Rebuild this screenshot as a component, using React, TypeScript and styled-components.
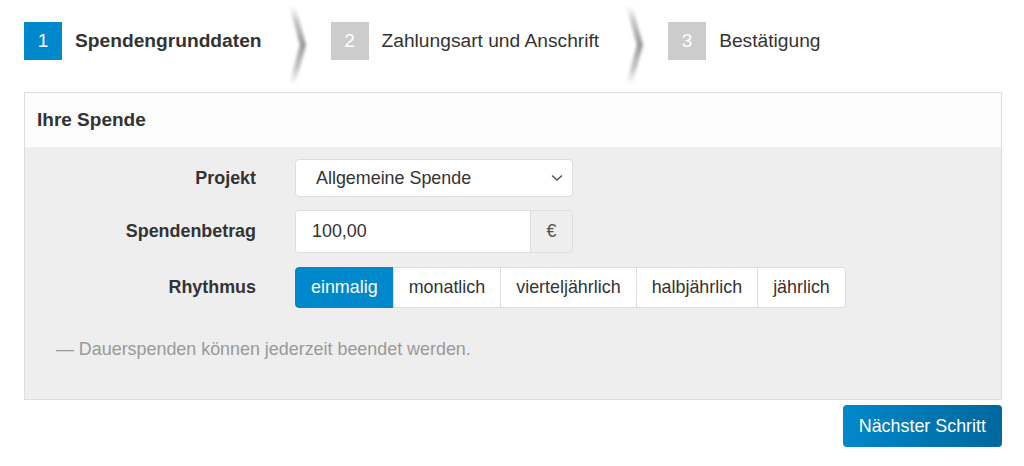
import styled, { createGlobalStyle } from "styled-components";

const GlobalStyle = createGlobalStyle`
  html, body {
    margin: 0;
    padding: 0;
    background: #ffffff;
    font-family: "Liberation Sans", Arial, sans-serif;
    color: #333333;
  }
`;

const steps = ["Spendengrunddaten", "Zahlungsart und Anschrift", "Bestätigung"];
const rhythms = ["einmalig", "monatlich", "vierteljährlich", "halbjährlich", "jährlich"];

export default function App() {
  return (
    <>
      <GlobalStyle />
      <Page>
        <Steps>
          {steps.map((title, i) => (
            <Step key={title}>
              <StepNumber $active={i === 0}>{i + 1}</StepNumber>
              <StepTitle $active={i === 0}>{title}</StepTitle>
              {i < steps.length - 1 && <Chevron />}
            </Step>
          ))}
        </Steps>

        <Panel>
          <PanelHeader>Ihre Spende</PanelHeader>
          <PanelBody>
            <Form>
              <Label>Projekt</Label>
              <Select>
                <span>Allgemeine Spende</span>
                <svg width="12" height="8" viewBox="0 0 12 8">
                  <path d="M1 1.5 L6 6 L11 1.5" fill="none" stroke="#555" strokeWidth="1.5" />
                </svg>
              </Select>

              <Label>Spendenbetrag</Label>
              <InputGroup>
                <Input>100,00</Input>
                <Addon>€</Addon>
              </InputGroup>

              <Label>Rhythmus</Label>
              <ButtonGroup>
                {rhythms.map((r, i) => (
                  <Segment key={r} $active={i === 0}>
                    {r}
                  </Segment>
                ))}
              </ButtonGroup>
            </Form>
            <Note>— Dauerspenden können jederzeit beendet werden.</Note>
          </PanelBody>
        </Panel>

        <Actions>
          <PrimaryButton>Nächster Schritt</PrimaryButton>
        </Actions>
      </Page>
    </>
  );
}

// soft shaded arrow between the wizard steps
function Chevron() {
  return (
    <ChevronSvg width="26" height="84" viewBox="0 0 26 84">
      <defs>
        <linearGradient id="chev" x1="0" y1="0" x2="0" y2="1">
          <stop offset="0" stopColor="#ccc" stopOpacity="0" />
          <stop offset="0.2" stopColor="#bbb" stopOpacity="0.8" />
          <stop offset="0.5" stopColor="#999" stopOpacity="1" />
          <stop offset="0.8" stopColor="#bbb" stopOpacity="0.8" />
          <stop offset="1" stopColor="#ccc" stopOpacity="0" />
        </linearGradient>
        <filter id="chevBlur" x="-50%" y="-10%" width="200%" height="120%">
          <feGaussianBlur stdDeviation="1.8" />
        </filter>
      </defs>
      <path
        d="M6 2 L17 42 L6 82"
        fill="none"
        stroke="url(#chev)"
        strokeWidth="6"
        filter="url(#chevBlur)"
      />
    </ChevronSvg>
  );
}

const Page = styled.div`
  width: 978px;
  padding: 22px 0 0 24px;
`;

const Steps = styled.div`
  display: flex;
  align-items: center;
  height: 38px;
  margin-bottom: 32px;
`;

const Step = styled.div`
  display: flex;
  align-items: center;
`;

const StepNumber = styled.div<{ $active: boolean }>`
  width: 38px;
  height: 38px;
  display: flex;
  align-items: center;
  justify-content: center;
  background: ${(p) => (p.$active ? "#0088cc" : "#cccccc")};
  color: #ffffff;
  font-size: 19px;
`;

const StepTitle = styled.div<{ $active: boolean }>`
  margin-left: 13px;
  font-size: 19.2px;
  font-weight: ${(p) => (p.$active ? "bold" : "normal")};
  color: #333333;
`;

const ChevronSvg = styled.svg`
  margin: -19px 19px -27px 24px;
  flex-shrink: 0;
`;

const Panel = styled.div`
  border: 1px solid #dddddd;
  background: #eeeeee;
`;

const PanelHeader = styled.div`
  height: 54px;
  display: flex;
  align-items: center;
  padding: 0 12px;
  background: #fcfcfc;
  font-size: 19px;
  font-weight: bold;
  color: #333333;
`;

const PanelBody = styled.div`
  padding: 12px 0 39px;
`;

const Form = styled.div`
  display: grid;
  grid-template-columns: 231px auto;
  justify-content: start;
  align-items: center;
  column-gap: 39px;
  row-gap: 13px;
`;

const Label = styled.div`
  text-align: right;
  font-size: 17.9px;
  font-weight: bold;
  color: #333333;
`;

const Select = styled.div`
  width: 278px;
  height: 38px;
  box-sizing: border-box;
  display: flex;
  align-items: center;
  justify-content: space-between;
  padding: 0 9px 0 20px;
  background: #ffffff;
  border: 1px solid #dddddd;
  border-radius: 4px;
  font-size: 17.9px;
  color: #333333;
`;

const InputGroup = styled.div`
  display: flex;
  width: 278px;
  height: 43px;
  box-sizing: border-box;
  border: 1px solid #dddddd;
  border-radius: 4px;
  overflow: hidden;
`;

const Input = styled.div`
  flex: 1;
  display: flex;
  align-items: center;
  padding: 0 16px;
  background: #ffffff;
  font-size: 17.9px;
  color: #333333;
`;

const Addon = styled.div`
  width: 41px;
  display: flex;
  align-items: center;
  justify-content: center;
  background: #eeeeee;
  border-left: 1px solid #dddddd;
  font-size: 17.9px;
  color: #555555;
`;

const ButtonGroup = styled.div`
  display: flex;
  margin-top: 1px;
`;

const Segment = styled.div<{ $active: boolean }>`
  height: 41px;
  box-sizing: border-box;
  display: flex;
  align-items: center;
  padding: 0 15px;
  font-size: 17.9px;
  background: ${(p) => (p.$active ? "#0088cc" : "#ffffff")};
  color: ${(p) => (p.$active ? "#ffffff" : "#333333")};
  border: 1px solid ${(p) => (p.$active ? "#0088cc" : "#dddddd")};
  margin-left: -1px;

  &:first-child {
    margin-left: 0;
    border-radius: 4px 0 0 4px;
  }
  &:last-child {
    border-radius: 0 4px 4px 0;
  }
`;

const Note = styled.div`
  margin: 31px 0 0 31px;
  font-size: 17.9px;
  color: #999999;
`;

const Actions = styled.div`
  display: flex;
  justify-content: flex-end;
  margin-top: 5px;
`;

const PrimaryButton = styled.div`
  height: 42px;
  display: flex;
  align-items: center;
  padding: 0 16px;
  border-radius: 4px;
  background: linear-gradient(to right, #0088cc, #00689c);
  color: #ffffff;
  font-size: 17.9px;
`;
